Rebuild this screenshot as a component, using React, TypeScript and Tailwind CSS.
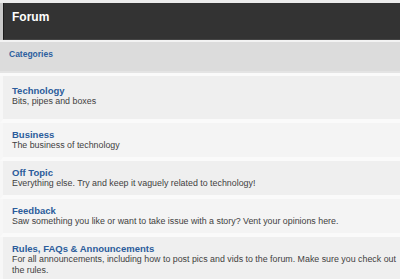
const categories = [
  { title: "Technology", desc: "Bits, pipes and boxes", first: true },
  { title: "Business", desc: "The business of technology" },
  {
    title: "Off Topic",
    desc: "Everything else. Try and keep it vaguely related to technology!",
  },
  {
    title: "Feedback",
    desc: "Saw something you like or want to take issue with a story? Vent your opinions here.",
  },
  {
    title: "Rules, FAQs & Announcements",
    desc: "For all announcements, including how to post pics and vids to the forum. Make sure you check out the rules.",
  },
];

export default function App() {
  return (
    <div className="w-[400px] h-[279px] overflow-hidden bg-[#f7f7f7] font-['Liberation_Sans',Arial,sans-serif]">
      <div className="h-[3px] bg-[#ececec]" />
      <div className="flex h-[37px] bg-[#c9c9c9] pl-[3px]">
        <div className="flex-1 flex items-center pl-[8px] pb-[8px] bg-[#333333] border-l border-[#1c1c1c] border-b border-b-[#444]">
          <h1 className="text-[12px] font-bold text-white leading-none">
            Forum
          </h1>
        </div>
      </div>
      <div className="h-[2px] bg-[#f3f3f3]" />
      <div className="h-[31px] flex items-center pl-[9px] pb-[4px] bg-[#dcdcdc] border-b-2 border-[#e4e4e4]">
        <span className="text-[8.5px] font-bold text-[#2d5f9f]">Categories</span>
      </div>
      <div className="h-[3px] bg-[#fafafa]" />
      <div className="flex flex-col">
        {categories.map((c, i) => (
          <div
            key={c.title}
            className={`border-l-[3px] border-[#f7f7f7] border-b-[4px] border-b-[#fafafa] pl-[9px] ${
              c.first ? "pt-[10px] pb-[12px]" : "pt-[7px] pb-[6px]"
            } ${i % 2 === 0 ? "bg-[#efefef]" : "bg-[#f4f4f4]"}`}
          >
            <div className="text-[9.5px] leading-[10px] font-bold text-[#2b5c9b]">
              {c.title}
            </div>
            <div className="text-[8.85px] leading-[11px] text-[#3f3f3f]">
              {c.desc}
            </div>
          </div>
        ))}
      </div>
    </div>
  );
}
